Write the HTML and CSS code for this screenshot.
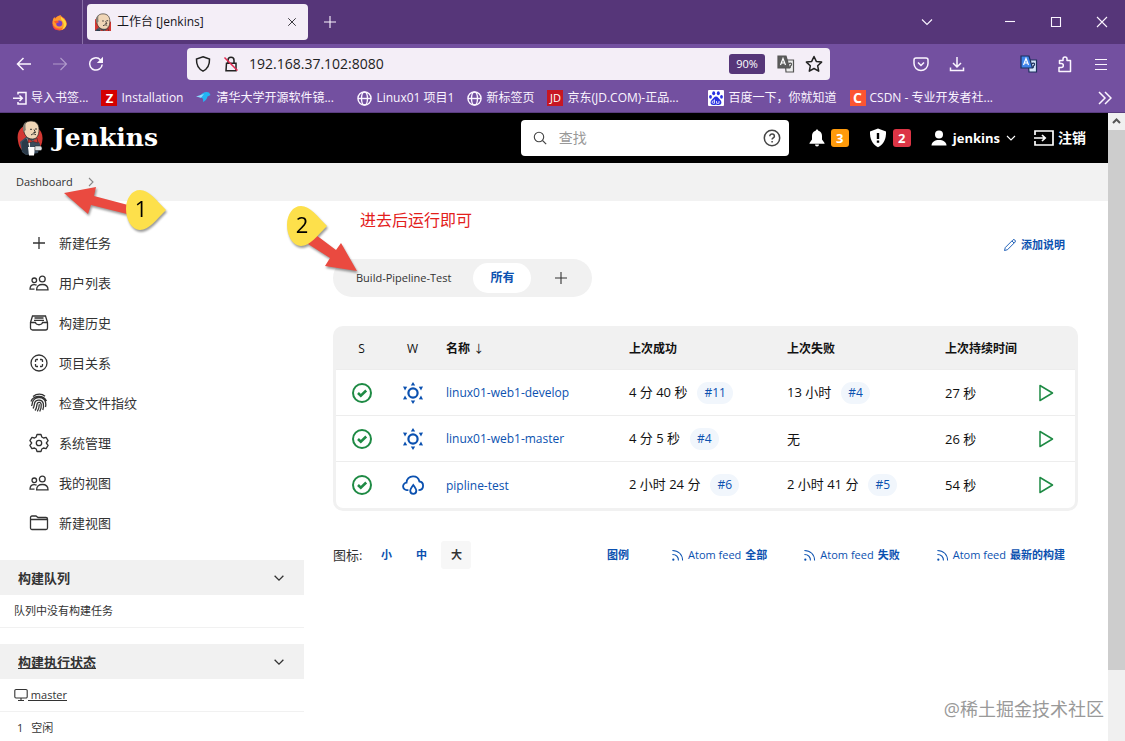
FILE: index.html
```html
<!DOCTYPE html>
<html lang="zh-CN">
<head>
    <meta charset="UTF-8">
    <meta name="viewport" content="width=device-width, initial-scale=1.0">
    <title>工作台 [Jenkins]</title>
    <link rel="stylesheet" href="styles.css">
</head>
<body>
    <!-- Iconos compartidos -->
    <svg class="sprite" aria-hidden="true">
        <symbol id="i-plus" viewBox="0 0 16 16"><path d="M8 2v12M2 8h12"/></symbol>
        <symbol id="i-down" viewBox="0 0 16 16"><path d="M3 5.5l5 5 5-5"/></symbol>
        <symbol id="i-close" viewBox="0 0 16 16"><path d="M3 3l10 10M13 3L3 13"/></symbol>
        <symbol id="i-globe" viewBox="0 0 16 16"><circle cx="8" cy="8" r="7"/><ellipse cx="8" cy="8" rx="3.2" ry="7"/><path d="M1 8h14"/></symbol>
        <symbol id="i-people" viewBox="0 0 20 20"><circle cx="13.3" cy="6" r="2.9"/><path d="M7.6 16.8c0-3.600 2.300-5.300 5.700-5.300s5.700 1.700 5.700 5.300z"/><circle cx="5.300" cy="7.300" r="2.300"/><path d="M5.500 16.200H1c0-3 1.600-4.600 4.300-4.600 1 0 1.700.2 2.300.5"/></symbol>
        <symbol id="i-check" viewBox="0 0 20 20"><circle cx="10" cy="10" r="9"/><path d="M6 10l2.800 2.700 5.400-5.200" stroke-width="2.600"/></symbol>
        <symbol id="i-sun" viewBox="0 0 22 22"><circle cx="11" cy="11" r="4.600" stroke-width="2.200"/><path class="solid" d="M11 0l2.200 3.500H8.800zM11 22l2.200-3.500H8.800zM1 4.500l4.200.3-2.200 3.700zM21 4.500l-4.200.3 2.200 3.700zM1 17.500l4.200-.3-2.200-3.700zM21 17.500l-4.200-.3 2.200-3.700z"/></symbol>
        <symbol id="i-rain" viewBox="0 0 24 22"><path d="M7 16.500H5.500a4 4 0 01-.6-8C5 4.500 8 1.500 12 1.500c3.700 0 6.300 2.300 7 5.700 2.400.2 4 2.200 4 4.500 0 2.600-2 4.700-5 4.800" stroke-width="2"/><path d="M12.300 11c-2 2.600-3.300 4.500-3.300 6.300a3.300 3.300 0 006.600 0c0-1.800-1.300-3.700-3.300-6.300z" stroke-width="2"/></symbol>
        <symbol id="i-play" viewBox="0 0 16 18"><path d="M2 1.500l12.500 7.500L2 16.500z" stroke-linejoin="round"/></symbol>
        <symbol id="i-feed" viewBox="0 0 14 14"><path d="M1.500 1.500c6.500 0 11 4.500 11 11M1.500 6c4 0 6.500 2.500 6.500 6.500"/><circle class="solid" cx="2.500" cy="11.500" r="1.200"/></symbol>
        <symbol id="i-translate" viewBox="0 0 18 18"><path class="tr-back" d="M8 5h8.500v12H9z"/><path class="tr-front" d="M1 1h8l3.500 12H1z"/><path d="M3.500 10L6 3.500 8.500 10M4.500 8h3" stroke="#fff"/><path class="tr-mark" d="M12 9c.5-1.500 3-1 2.500.7-.3.900-1.300 1-1.300 2.300v1"/></symbol>
    </svg>

    <header class="titlebar">
        <div class="firefox-view">
            <svg width="17" height="17" viewBox="0 0 18 18"><circle cx="9" cy="10" r="7.500" fill="#ff6a2b"/><path d="M2 6c.3-1 .9-2 1.600-2.700.2 1 .6 1.500 1.200 1.900C6 2.500 8 1.500 10.500 1c-.5 1.500 0 2.300 1.500 3.300 3.500 2.300 5 5 4.500 7.700-2 3-9.500 5-13 1C1.500 11 1.500 8.500 2 6z" fill="#ff9a2e"/><path d="M11 1.500c-.3 1.500.5 2.300 2 3.300 2 1.500 3.500 4 3 7.200-.5 2.500-2.500 4.500-5 5 3-2.500 3.500-7 .5-10-1-1.500-1.500-3.500-.5-5.500z" fill="#ffd83a"/><circle cx="8.700" cy="10" r="3.200" fill="#7b3fc4"/><path d="M3 8c2.500-1.500 4.500-.5 6 .8-1.800 0-2.500 1.200-4 1.200z" fill="#ff5a2a"/><path d="M1.600 11c.5 3.500 4 5.700 7.900 5.300-3 2-7.800 0-7.900-5.300z" fill="#ff2c55"/></svg>
        </div>
        <div class="tab">
            <svg width="16" height="18" viewBox="5 0 18 21"><use href="#butler" width="26" height="36"/></svg>
            <span class="tab-title">工作台 [Jenkins]</span>
            <button class="tab-close" aria-label="关闭标签页"><svg class="line" width="12" height="12"><use href="#i-close"/></svg></button>
        </div>
        <button class="tool" aria-label="新标签页"><svg class="line" width="16" height="16"><use href="#i-plus"/></svg></button>
        <div class="grow"></div>
        <button class="tool tabs-list" aria-label="列出标签页"><svg class="line" width="16" height="16"><use href="#i-down"/></svg></button>
        <button class="win-button" aria-label="最小化"><svg class="line" width="12" height="12" viewBox="0 0 12 12"><path d="M1 5.500h10"/></svg></button>
        <button class="win-button" aria-label="最大化"><svg class="line" width="12" height="12" viewBox="0 0 12 12"><path d="M1.500 1.500h9v9h-9z"/></svg></button>
        <button class="win-button" aria-label="关闭"><svg class="line" width="12" height="12" viewBox="0 0 12 12"><path d="M1 1l10 10M11 1L1 11"/></svg></button>
    </header>

    <nav class="toolbar">
        <button class="tool" aria-label="后退"><svg class="line thick" width="16" height="16" viewBox="0 0 16 16"><path d="M15 8H1.500M7.500 2l-6 6 6 6"/></svg></button>
        <button class="tool dim" aria-label="前进"><svg class="line" width="16" height="16" viewBox="0 0 16 16"><path d="M1 8h13.500M8.500 2l6 6-6 6"/></svg></button>
        <button class="tool" aria-label="刷新"><svg class="line thick" width="16" height="16" viewBox="0 0 16 16"><path d="M14.200 8.500A6.300 6.300 0 112 5.700 6.300 6.300 0 0112.500 4"/><path class="solid" d="M15 .8V7H8.800z"/></svg></button>
        <div class="spring"></div>
        <div class="urlbar">
            <svg class="line thick" width="16" height="16" viewBox="0 0 16 16"><path d="M8 .8l6.500 2.300c.2 5.500-1.800 9.700-6.500 12C3.300 12.800 1.300 8.600 1.500 3.100z"/></svg>
            <svg class="line thick" width="16" height="16" viewBox="0 0 16 16"><path d="M5 7V4.200a3 3 0 016 0V7M3.500 7.200h9.500v7.500H3z"/><path d="M1.500 1.500l13 13" stroke="#e22850"/></svg>
            <input class="url-input" type="text" value="192.168.37.102:8080" aria-label="网址">
            <button class="zoom-badge">90%</button>
            <button class="url-button" aria-label="翻译"><svg class="translate gray" width="18" height="18"><use href="#i-translate"/></svg></button>
            <button class="url-button" aria-label="收藏"><svg class="line thick" width="18" height="18" viewBox="0 0 18 18"><path d="M9 1.500l2.300 4.900 5.300.7-3.900 3.700 1 5.400L9 13.500l-4.700 2.700 1-5.400-3.900-3.700 5.300-.7z" stroke-linejoin="round"/></svg></button>
        </div>
        <div class="spring"></div>
        <button class="tool" aria-label="Pocket"><svg class="line thick" width="16" height="16" viewBox="0 0 16 16"><path d="M3 2h10a2 2 0 012 2v3.500a7 7 0 01-14 0V4a2 2 0 012-2z"/><path d="M5 6.500l3 3 3-3"/></svg></button>
        <button class="tool" aria-label="下载"><svg class="line thick" width="16" height="16" viewBox="0 0 16 16"><path d="M8 1v9.500M4 7l4 4 4-4M1.500 11.500v3h13v-3"/></svg></button>
        <div class="tool"></div>
        <button class="tool" aria-label="翻译"><svg class="translate blue" width="18" height="18"><use href="#i-translate"/></svg></button>
        <button class="tool" aria-label="扩展"><svg class="line thick" width="16" height="18" viewBox="0 0 16 18"><path d="M2 16.500h11.500v-11H10V4a2 2 0 00-4 0v1.500H2.500v3h1.800a1.800 1.800 0 010 4H2z" stroke-linejoin="round"/></svg></button>
        <button class="tool" aria-label="菜单"><svg class="line" width="14" height="14" viewBox="0 0 14 14"><path d="M1 2.500h12M1 7.500h12M1 12.500h12"/></svg></button>
    </nav>

    <nav class="bookmarks">
        <a class="bookmark" href="#"><svg class="line thick" width="14" height="14" viewBox="0 0 14 14"><path d="M5 3.500V1.500h8v11.500H5v-2M0 7.300h9M6.500 4.500L9.300 7.300 6.500 10"/></svg>导入书签...</a>
        <a class="bookmark" href="#"><span class="site zabbix">Z</span>Installation</a>
        <a class="bookmark bookmark-long" href="#"><svg width="16" height="16" viewBox="0 0 16 16"><path d="M3 7c3-4.500 7-6 10-4.500L14.500 5l-3 1.500c-.5 2.500-2 4.500-4.500 5.500.5-2 0-3.500-1-4z" fill="#22b5f5"/><path d="M0 6.500l5 1.300L8 4z" fill="#8fdcff"/></svg>清华大学开源软件镜...</a>
        <a class="bookmark" href="#"><svg class="line thick" width="15" height="15"><use href="#i-globe"/></svg>Linux01 项目1</a>
        <a class="bookmark" href="#"><svg class="line thick" width="15" height="15"><use href="#i-globe"/></svg>新标签页</a>
        <a class="bookmark bookmark-long" href="#"><span class="site jd">JD</span>京东(JD.COM)-正品...</a>
        <a class="bookmark" href="#"><svg width="16" height="16" viewBox="0 0 16 16"><rect width="16" height="16" rx="1" fill="#fff"/><g fill="#2932e1"><ellipse cx="5.700" cy="3.300" rx="1.500" ry="2"/><ellipse cx="10.300" cy="3.300" rx="1.500" ry="2"/><ellipse cx="2.500" cy="6.800" rx="1.400" ry="1.900"/><ellipse cx="13.500" cy="6.800" rx="1.400" ry="1.900"/><path d="M8 6.500c2 0 2.500 2 4.300 3.500 2 2 1.200 5-1.500 5-1.200 0-1.800-.3-2.800-.3s-1.600.3-2.800.3c-2.700 0-3.500-3-1.500-5C5.500 8.500 6 6.500 8 6.500z"/></g><path d="M6.500 9.500v3.800H5.300a1 1 0 010-2.300h1M8.500 11v2.300H11V11" stroke="#fff" fill="none" stroke-width=".8"/></svg>百度一下，你就知道</a>
        <a class="bookmark bookmark-long" href="#"><span class="site csdn">C</span>CSDN - 专业开发者社...</a>
        <button class="more" aria-label="更多书签"><svg class="line thick" width="14" height="14" viewBox="0 0 14 14"><path d="M1 1l6 6-6 6M7 1l6 6-6 6"/></svg></button>
    </nav>

    <div class="viewport">
        <div class="page">
            <header class="page-header">
                <a class="logo" href="#">
                    <svg width="26" height="36" viewBox="0 0 26 36">
                        <symbol id="butler" viewBox="0 0 26 36">
                            <path d="M1 21C-1 11 5 5 12 5s14 5 13.500 14-6 14-12 14S2 30 1 21z" fill="#d33833"/>
                            <path d="M3 22l6-5 9 1 5 6-2 9-12 2-4-3z" fill="#3b4d5e"/>
                            <path d="M9 18l6 3 5-3-1 12H9z" fill="#e8e4dc"/>
                            <path d="M5 22l5-4 3 12-3 5-5-4z" fill="#2b3a49"/>
                            <path d="M13 22l7-2 3 5-4 6-6-1z" fill="#3b4d5e"/>
                            <path d="M6.500 9C6.500 4 9 1 14 1c5 0 8 3 8 8.500 0 5.500-2 9.500-6.500 9.500C10 19 7 15 6.500 9z" fill="#f0d6b7" stroke="#222" stroke-width=".7"/>
                            <path d="M6.800 12C5 8 6 4 9 2c-.8 3-.5 5-.2 8z" fill="#847d72"/>
                            <path d="M13 9.300h2M18 9h2M14 15c1.500-1.500 4-1.500 5 0M17 9.500l1.500 3h-2" stroke="#222" stroke-width=".9" fill="none"/>
                            <path d="M11 19l4.500 2L20 18l1 5-5-1.500L11 23z" fill="#d33833" stroke="#222" stroke-width=".5"/>
                            <path d="M11 27h7l-1 8.500h-5z" fill="#fff"/>
                            <path d="M18 26h5.500c2 1 2 4 0 4.500H18z" fill="#dfe3e6" stroke="#222" stroke-width=".5"/>
                        </symbol>
                        <use href="#butler"/>
                    </svg>
                    <span class="logo-text">Jenkins</span>
                </a>
                <div class="grow"></div>
                <div class="search">
                    <svg class="line" width="14" height="14" viewBox="0 0 14 14"><circle cx="6" cy="6" r="4.700"/><path d="M9.500 9.500l3.700 3.700"/></svg>
                    <input class="search-input" type="text" placeholder="查找" aria-label="查找">
                    <a class="help" href="#" aria-label="帮助"><svg class="line thick" width="18" height="18" viewBox="0 0 18 18"><circle cx="9" cy="9" r="7.700"/><path d="M6.800 7.200c0-3 4.600-2.800 4.600 0 0 1.600-2.300 1.600-2.300 3.300M9.100 12v1.400"/></svg></a>
                </div>
                <a class="header-link" href="#"><svg width="16" height="18" viewBox="0 0 16 18" fill="#fff"><path d="M8 .5c.9 0 1.300.6 1.300 1.300C12 2.400 13 4.500 13 7v3.500l2.500 3.500v.8H.5V14L3 10.500V7c0-2.500 1-4.600 3.700-5.200C6.700 1.100 7.100.5 8 .5zM6 15.500h4a2 2 0 01-4 0z"/></svg><span class="badge orange">3</span></a>
                <a class="header-link" href="#"><svg width="18" height="20" viewBox="0 0 18 20"><path d="M9 .5l8 3c.3 7-2 12.500-8 15.800C3 16 .7 10.500 1 3.500z" fill="#fff"/><path d="M9 5v6M9 12.500v2.300" stroke="#000" stroke-width="2.400"/></svg><span class="badge red">2</span></a>
                <a class="header-link" href="#"><svg width="16" height="16" viewBox="0 0 16 16" fill="#fff"><circle cx="8" cy="4.500" r="4"/><path d="M.5 15.500c0-3.500 3.500-5.500 7.500-5.500s7.500 2 7.500 5.500z"/></svg>jenkins<svg class="line" width="10" height="10" viewBox="0 0 10 10"><path d="M1 3l4 4 4-4"/></svg></a>
                <a class="header-link logout" href="#"><svg class="line thick" width="20" height="16" viewBox="0 0 20 16"><path d="M1 5V1h18v14H1v-4M0 8h11M8 5l3.200 3L8 11" stroke-width="1.700"/></svg>注销</a>
            </header>

            <nav class="breadcrumb">
                <a href="#">Dashboard</a>
                <svg class="line" width="8" height="10" viewBox="0 0 8 10"><path d="M2 1l4 4-4 4"/></svg>
            </nav>

            <div class="content">
                <aside class="sidebar">
                    <ul class="tasks">
                        <li><a href="#"><svg class="line" width="20" height="20" viewBox="0 0 20 20"><path d="M10 4v12M4 10h12"/></svg>新建任务</a></li>
                        <li><a href="#"><svg class="line" width="20" height="20"><use href="#i-people"/></svg>用户列表</a></li>
                        <li><a href="#"><svg class="line" width="20" height="20" viewBox="0 0 20 20"><path d="M1.500 9.500L3.500 3h13l2 6.500V15a2 2 0 01-2 2h-13a2 2 0 01-2-2zh5c.5 3 6.500 3 7 0h5M5.500 5h9M5 7.300h10"/></svg>构建历史</a></li>
                        <li><a href="#"><svg class="line" width="20" height="20" viewBox="0 0 20 20"><circle cx="10" cy="10" r="8"/><path d="M6.500 9V7.500a1 1 0 011-1H9M11 6.500h1.500a1 1 0 011 1V9M13.500 11v1.500a1 1 0 01-1 1H11M9 13.500H7.500a1 1 0 01-1-1V11"/></svg>项目关系</a></li>
                        <li><a href="#"><svg class="line" width="20" height="20" viewBox="0 0 20 20"><path d="M4 3.500C8 .3 13 .5 16 3.300M2 8.500c2-6 12-7.500 15.500-.5M2.500 13c1-1.500.5-3 1.500-5 2.500-5 11-4.500 12.500 1 .4 1.800.4 3.500 0 5M4 15.500c1.500-2 1-4 1.800-6 1.500-3.500 7.500-3 8.500.8.5 2.500.3 4.500-.5 6.700M6 17.500c2.200-2.500 1.400-5 2.300-7 1-1.700 3.600-1.300 3.900.8.300 2.500-.3 5-1.500 7.200M8.300 18.300c1.900-2.500 2-4.800 2-7"/></svg>检查文件指纹</a></li>
                        <li><a href="#"><svg class="line" width="20" height="20" viewBox="0 0 20 20"><circle cx="10" cy="10" r="2.700"/><path d="M8 1.500h4l.8 2.500 1.700 1 2.600-.6 2 3.300-1.800 2.300 1.800 2.300-2 3.300-2.600-.6-1.700 1-.8 2.500H8L7.200 16l-1.700-1-2.600.6-2-3.300L2.700 10 .9 7.700l2-3.300 2.600.6 1.700-1z" stroke-linejoin="round"/></svg>系统管理</a></li>
                        <li><a href="#"><svg class="line" width="20" height="20"><use href="#i-people"/></svg>我的视图</a></li>
                        <li><a href="#"><svg class="line" width="20" height="20" viewBox="0 0 20 20"><path d="M1.500 6.500V4.500a1.500 1.500 0 011.500-1.500h4l2 1.500h8a1.500 1.500 0 011.500 1.500v9a1.500 1.500 0 01-1.500 1.500H3a1.500 1.500 0 01-1.500-1.500zh17"/></svg>新建视图</a></li>
                    </ul>

                    <section class="pane">
                        <h2 class="pane-title"><span>构建队列</span><button aria-label="收起"><svg class="line thick" width="14" height="14"><use href="#i-down"/></svg></button></h2>
                        <p class="pane-row">队列中没有构建任务</p>
                    </section>
                    <section class="pane">
                        <h2 class="pane-title"><a href="#">构建执行状态</a><button aria-label="收起"><svg class="line thick" width="14" height="14"><use href="#i-down"/></svg></button></h2>
                        <p class="pane-row"><svg class="line" width="14" height="14" viewBox="0 0 14 14"><path d="M2 1.500h10a1.200 1.200 0 011.200 1.200v6.100A1.200 1.200 0 0112 10H2A1.200 1.200 0 01.8 8.800V2.700A1.200 1.200 0 012 1.500zM4 12.500h6M7 10v2.500"/></svg><a href="#">&nbsp;master</a></p>
                        <p class="pane-row executor"><span>1</span>空闲</p>
                    </section>
                </aside>

                <main class="main">
                    <a class="describe" href="#"><svg class="line" width="14" height="14" viewBox="0 0 14 14"><path d="M1.500 12.500l.8-3L10 1.800c1.200-1 3 .8 2.200 2.200L4.500 11.700zM9 3l2 2" stroke-width=".9"/></svg>添加说明</a>

                    <nav class="views">
                        <a class="view" href="#">Build-Pipeline-Test</a>
                        <a class="view active" href="#">所有</a>
                        <a class="view" href="#" aria-label="新建视图"><svg class="line" width="16" height="16"><use href="#i-plus"/></svg></a>
                    </nav>

                    <table class="jobs">
                        <thead>
                            <tr>
                                <th class="status">S</th>
                                <th class="status">W</th>
                                <th class="name">名称 <span class="arrow">↓</span></th>
                                <th class="time">上次成功</th>
                                <th class="time">上次失败</th>
                                <th>上次持续时间</th>
                                <th class="run"></th>
                            </tr>
                        </thead>
                        <tbody>
                            <tr>
                                <td class="status"><svg class="line success" width="20" height="20"><use href="#i-check"/></svg></td>
                                <td class="status"><svg class="line weather" width="22" height="22"><use href="#i-sun"/></svg></td>
                                <td><a class="job" href="#">linux01-web1-develop</a></td>
                                <td>4 分 40 秒<a class="build" href="#">#11</a></td>
                                <td>13 小时<a class="build" href="#">#4</a></td>
                                <td>27 秒</td>
                                <td class="run"><button aria-label="构建"><svg class="line thick" width="16" height="18"><use href="#i-play"/></svg></button></td>
                            </tr>
                            <tr>
                                <td class="status"><svg class="line success" width="20" height="20"><use href="#i-check"/></svg></td>
                                <td class="status"><svg class="line weather" width="22" height="22"><use href="#i-sun"/></svg></td>
                                <td><a class="job" href="#">linux01-web1-master</a></td>
                                <td>4 分 5 秒<a class="build" href="#">#4</a></td>
                                <td>无</td>
                                <td>26 秒</td>
                                <td class="run"><button aria-label="构建"><svg class="line thick" width="16" height="18"><use href="#i-play"/></svg></button></td>
                            </tr>
                            <tr>
                                <td class="status"><svg class="line success" width="20" height="20"><use href="#i-check"/></svg></td>
                                <td class="status"><svg class="line weather" width="22" height="22"><use href="#i-rain"/></svg></td>
                                <td><a class="job" href="#">pipline-test</a></td>
                                <td>2 小时 24 分<a class="build" href="#">#6</a></td>
                                <td>2 小时 41 分<a class="build" href="#">#5</a></td>
                                <td>54 秒</td>
                                <td class="run"><button aria-label="构建"><svg class="line thick" width="16" height="18"><use href="#i-play"/></svg></button></td>
                            </tr>
                        </tbody>
                    </table>

                    <div class="table-footer">
                        <div class="sizes">
                            <span class="sizes-label">图标:</span>
                            <a class="size" href="#">小</a>
                            <a class="size" href="#">中</a>
                            <span class="size current">大</span>
                        </div>
                        <div class="feeds">
                            <a class="legend" href="#">图例</a>
                            <a href="#"><svg class="line" width="13" height="13"><use href="#i-feed"/></svg>Atom feed <b>全部</b></a>
                            <a href="#"><svg class="line" width="13" height="13"><use href="#i-feed"/></svg>Atom feed <b>失败</b></a>
                            <a href="#"><svg class="line" width="13" height="13"><use href="#i-feed"/></svg>Atom feed <b>最新的构建</b></a>
                        </div>
                    </div>
                </main>
            </div>
        </div>
        <div class="scrollbar">
            <svg class="line" width="17" height="17" viewBox="0 0 17 17"><path d="M5 10l3.500-3.500L12 10" stroke-width="2"/></svg>
            <div class="thumb"></div>
        </div>
    </div>

    <!-- Anotaciones encima de la página -->
    <svg class="callout callout-one" width="110" height="50" viewBox="0 0 110 50">
        <path d="M4 7l32-6-2 9 34 9-1 9-36-9-3 9z" fill="#ea4a40"/>
        <path d="M66 23c0-11 6-19 14-19 9 0 16 10 26 20-10 10-17 20-26 20-8 0-14-10-14-21z" fill="#fde04b"/>
        <text x="81" y="31" text-anchor="middle">1</text>
    </svg>
    <svg class="callout callout-two" width="80" height="74" viewBox="0 0 80 74">
        <path d="M74 69L58 41l-5 7-20-15-8 9 22 14-5 8z" fill="#ea4a40"/>
        <path d="M4 23c0-11 6-19 14-19 9 0 16 10 26 20-10 10-17 20-26 20-8 0-14-10-14-21z" fill="#fde04b"/>
        <text x="19" y="31" text-anchor="middle">2</text>
    </svg>
    <p class="note">进去后运行即可</p>
    <p class="watermark">@稀土掘金技术社区</p>
</body>
</html>
```

FILE: styles.css
```css
* {
    box-sizing: border-box;
}
body {
    margin: 0;
    height: 100vh;
    display: flex;
    flex-direction: column;
    overflow: hidden;
    position: relative;
    font-family: "Open Sans", "Noto Sans CJK SC", sans-serif;
    font-size: 12px;
    line-height: 16px;
    color: #333;
    background-color: #fff;
}
a {
    color: inherit;
    text-decoration: none;
}
button {
    display: flex;
    align-items: center;
    justify-content: center;
    padding: 0;
    border: 0;
    background: none;
    color: inherit;
    font: inherit;
}
input {
    border: 0;
    outline: 0;
    padding: 0;
    background: none;
    color: inherit;
    font: inherit;
    min-width: 0;
}
p, h2, ul {
    margin: 0;
    padding: 0;
}
svg {
    flex: none;
}
.sprite {
    display: none;
}
.line {
    fill: none;
    stroke: currentColor;
    stroke-width: 1.1;
}
.thick {
    stroke-width: 1.5;
}
.solid {
    fill: currentColor;
    stroke: none;
}
.grow {
    flex: 1;
}

/* Navegador */
.titlebar {
    display: flex;
    align-items: center;
    height: 44px;
    background-color: #563679;
    color: #fbf5ff;
}
.firefox-view {
    display: flex;
    align-items: center;
    justify-content: flex-end;
    width: 83px;
    height: 44px;
    padding-right: 14px;
    border-right: 1px solid #8a70a8;
}
.tab {
    display: flex;
    align-items: center;
    gap: 6px;
    width: 221px;
    height: 36px;
    margin: 0 4px;
    padding: 0 10px 0 8px;
    border-radius: 4px;
    background-color: #f4eef7;
    color: #15141a;
}
.tab-title {
    flex: 1;
}
.tool {
    display: flex;
    align-items: center;
    justify-content: center;
    width: 36px;
    height: 36px;
}
.tabs-list {
    margin-right: 42px;
}
.win-button {
    width: 46px;
    height: 44px;
}
.toolbar {
    display: flex;
    align-items: center;
    height: 40px;
    padding: 0 6px;
    background-color: #7350a0;
    color: #fbf5ff;
}
.dim {
    opacity: 0.45;
}
.spring {
    flex: 1;
    max-width: 73px;
}
.urlbar {
    display: flex;
    flex: 6;
    align-items: center;
    gap: 12px;
    height: 32px;
    padding: 0 9px 0 8px;
    border-radius: 4px;
    background-color: #f4eef7;
    color: #222;
}
.url-input {
    flex: 1;
    margin-left: -2px;
    font-size: 14px;
    line-height: 20px;
}
.zoom-badge {
    width: 36px;
    height: 20px;
    border-radius: 3px;
    background-color: #563679;
    color: #fff;
    font-size: 11px;
}
.url-button {
    width: 18px;
    height: 18px;
    margin-right: -2px;
}
.translate {
    fill: none;
    stroke-width: 1.2;
}
.gray {
    --front: #5c5c5c;
    --back: #ededed;
    --edge: #555;
}
.blue {
    --front: #3f83e8;
    --back: #d5e6fb;
    --edge: #1d2f5c;
}
.tr-front {
    fill: var(--front);
    stroke: var(--edge);
}
.tr-back {
    fill: var(--back);
    stroke: var(--edge);
}
.tr-mark {
    stroke: var(--edge);
}
.bookmarks {
    display: flex;
    align-items: center;
    gap: 13px;
    height: 29px;
    padding: 0 13px;
    background-color: #7350a0;
    border-bottom: 1px solid #5a3d80;
    color: #fbf5ff;
}
.bookmark {
    display: flex;
    align-items: center;
    gap: 4px;
    white-space: nowrap;
}
.bookmark-long {
    width: 148px;
}
.site {
    width: 16px;
    height: 16px;
    text-align: center;
    color: #fff;
}
.zabbix {
    background-color: #d40000;
    font-size: 13px;
    font-weight: bold;
}
.jd {
    background-color: #c71622;
    font-size: 11px;
}
.csdn {
    background-color: #fc5531;
    font-size: 14px;
    font-weight: bold;
}
.more {
    margin-left: auto;
}

/* Cabecera de la página */
.viewport {
    display: flex;
    flex: 1;
    min-height: 0;
}
.page {
    flex: 1;
    min-width: 0;
    overflow: hidden;
}
.page-header {
    display: flex;
    align-items: center;
    height: 50px;
    padding: 0 22px 0 17px;
    background-color: #000;
    color: #fff;
}
.logo {
    display: flex;
    align-items: center;
    gap: 10px;
}
.logo-text {
    font-family: "DejaVu Serif", serif;
    font-size: 25px;
    font-weight: bold;
    line-height: 32px;
}
.search {
    display: flex;
    align-items: center;
    gap: 12px;
    width: 268px;
    height: 36px;
    padding: 0 8px 0 12px;
    border-radius: 4px;
    background-color: #fff;
    color: #444;
}
.search-input {
    flex: 1;
    font-size: 14px;
    line-height: 20px;
}
.search-input::placeholder {
    color: #999;
}
.help {
    display: flex;
}
.header-link {
    display: flex;
    align-items: center;
    gap: 6px;
    margin-left: 20px;
    font-size: 13px;
    font-weight: bold;
}
.logout {
    gap: 4px;
    margin-left: 18px;
    font-size: 14px;
}
.badge {
    width: 18px;
    height: 18px;
    border-radius: 3px;
    font-size: 13px;
    line-height: 18px;
    text-align: center;
}
.orange {
    background-color: #fe9a0b;
}
.red {
    background-color: #dc3545;
}
.breadcrumb {
    display: flex;
    align-items: center;
    gap: 14px;
    height: 38px;
    padding: 0 16px;
    background-color: #f2f2f2;
    font-size: 11px;
}
.breadcrumb svg {
    color: #888;
}

/* Menú lateral */
.content {
    display: flex;
}
.sidebar {
    width: 304px;
    padding-top: 22px;
}
.tasks {
    margin-bottom: 17px;
    list-style: none;
    font-size: 13px;
}
.tasks a {
    display: flex;
    align-items: center;
    gap: 10px;
    height: 40px;
    padding-left: 29px;
}
.tasks svg {
    stroke-width: 1.3;
}
.pane {
    margin-bottom: 16px;
}
.pane-title {
    display: flex;
    align-items: center;
    justify-content: space-between;
    height: 35px;
    padding: 0 18px;
    background-color: #f1f1f1;
    font-size: 13px;
}
.pane-title a, .pane-row a {
    text-decoration: underline;
}
.pane-row {
    display: flex;
    align-items: center;
    height: 33px;
    padding: 0 14px;
    border-bottom: 1px solid #f1f1f1;
    font-size: 11px;
}
.executor {
    gap: 8px;
    padding-left: 17px;
}

/* Contenido */
.main {
    display: flex;
    flex: 1;
    flex-direction: column;
    min-width: 0;
    padding: 36px 30px 0 29px;
}
.describe {
    display: flex;
    align-items: center;
    align-self: flex-end;
    gap: 4px;
    margin-right: 13px;
    color: #0b51b0;
    font-size: 11px;
    font-weight: bold;
}
.views {
    display: flex;
    align-items: center;
    align-self: flex-start;
    height: 38px;
    margin: 6px 0 29px;
    padding: 0 1px;
    border-radius: 19px;
    background-color: #f1f1f1;
    font-size: 11px;
}
.view {
    display: flex;
    align-items: center;
    height: 30px;
    padding: 0 22px;
    border-radius: 15px;
}
.active {
    padding: 0 17px;
    background-color: #fff;
    color: #0b51b0;
    font-size: 12px;
    font-weight: bold;
}
.jobs {
    width: 100%;
    table-layout: fixed;
    border: 3px solid #f1f1f1;
    border-radius: 10px;
    border-spacing: 0;
    color: #111;
    font-size: 13px;
}
.jobs th, .jobs td {
    height: 46px;
    padding: 0 0 0 8px;
    border-bottom: 1px solid #ededed;
    text-align: left;
    white-space: nowrap;
}
.jobs th {
    height: 41px;
    background-color: #f1f1f1;
    font-size: 12px;
}
.jobs tr:last-child td {
    border-bottom: 0;
}
.jobs td a {
    color: #0b51b0;
}
.jobs svg {
    display: block;
    margin: 0 auto;
}
.jobs .status {
    width: 51px;
    padding: 0;
    font-weight: normal;
    text-align: center;
}
.name {
    width: 183px;
}
.job {
    font-size: 12px;
}
.time {
    width: 158px;
}
.arrow {
    font-size: 11px;
    font-weight: normal;
}
.jobs .run {
    width: 58px;
    padding: 0;
}
.run button {
    width: 100%;
    color: #1e8a44;
}
.success {
    stroke-width: 2;
    color: #1e8a44;
}
.weather {
    color: #0b51b0;
}
.jobs .build {
    display: inline-block;
    margin-left: 10px;
    padding: 3px 7px;
    border-radius: 11px;
    background-color: #f1f6fc;
    font-size: 12px;
}
.table-footer {
    display: flex;
    align-items: center;
    justify-content: space-between;
    margin-top: 30px;
    padding-right: 13px;
}
.sizes {
    display: flex;
    align-items: center;
    gap: 5px;
}
.sizes-label {
    margin-right: 4px;
    font-size: 13px;
}
.size {
    width: 30px;
    height: 28px;
    border-radius: 3px;
    font-size: 11px;
    font-weight: bold;
    line-height: 28px;
    text-align: center;
    color: #0b51b0;
}
.current {
    background-color: #f7f7f7;
    color: #333;
}
.feeds {
    display: flex;
    gap: 36px;
    color: #0b51b0;
    font-size: 11px;
}
.feeds a {
    display: flex;
    align-items: center;
    gap: 4px;
}
.legend {
    margin-right: 6px;
    font-weight: bold;
}
.scrollbar {
    width: 17px;
    background-color: #f0f0f0;
    color: #555;
}
.scrollbar svg {
    display: block;
}
.thumb {
    height: 86%;
    background-color: #cdcdcd;
}

/* Anotaciones */
.callout {
    position: absolute;
    filter: drop-shadow(1px 2px 1px rgba(0, 0, 0, 0.4));
    font-size: 22px;
}
.callout-one {
    left: 60px;
    top: 186px;
}
.callout-two {
    left: 283px;
    top: 202px;
}
.note {
    position: absolute;
    left: 360px;
    top: 210px;
    color: #e3201b;
    font-size: 16px;
    line-height: 20px;
}
.watermark {
    position: absolute;
    right: 21px;
    bottom: 20px;
    color: #999;
    font-size: 18px;
    line-height: 24px;
}
```
